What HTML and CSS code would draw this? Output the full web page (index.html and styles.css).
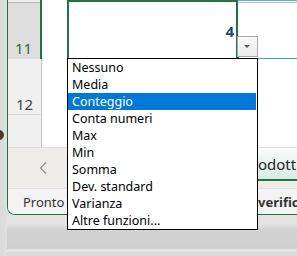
FILE: index.html
```html
<!DOCTYPE html>
<html lang="it">
<head>
    <meta charset="UTF-8">
    <meta name="viewport" content="width=device-width, initial-scale=1.0">
    <title>Foglio - Prodotti</title>
    <link rel="stylesheet" href="styles.css">
</head>
<body>
    <div class="desk">
        <div class="window">
            <div class="sheet">
                <!-- riga 11, cella attiva -->
                <div class="row r11">
                    <div class="rh sel">11</div>
                    <div class="cell a"></div>
                    <div class="cell active"><span class="num">4</span></div>
                    <div class="cell c"></div>
                </div>
                <div class="row r12">
                    <div class="rh">12</div>
                    <div class="cell a"></div>
                    <div class="cell wide"></div>
                </div>
                <div class="row r13">
                    <div class="rh"></div>
                    <div class="cell a"></div>
                    <div class="cell wide"></div>
                </div>
            </div>
            <div class="hscroll">
                <div class="nav">
                    <svg class="chev" width="8" height="12" viewBox="0 0 8 12">
                        <polyline points="7,0.5 1.5,6 7,11.5" fill="none" stroke="#8c8c8c" stroke-width="1.2"/>
                    </svg>
                </div>
                <div class="tab">Prodotti</div>
            </div>
            <div class="status">
                <span class="ready">Pronto</span>
                <span class="access">verificare</span>
            </div>
        </div>
        <div class="dot"></div>
    </div>

    <!-- menu a discesa della riga totali -->
    <button class="dd-btn"><span class="arrow"></span></button>
    <ul class="menu">
        <li>Nessuno</li>
        <li>Media</li>
        <li class="on">Conteggio</li>
        <li>Conta numeri</li>
        <li>Max</li>
        <li>Min</li>
        <li>Somma</li>
        <li>Dev. standard</li>
        <li>Varianza</li>
        <li>Altre funzioni...</li>
    </ul>
</body>
</html>
```

FILE: styles.css
```css
body {
    margin: 0;
    width: 297px;
    height: 256px;
    overflow: hidden;
    position: relative;
    font-family: "Noto Sans", "Open Sans", sans-serif;
    background: linear-gradient(to bottom, #e3e3e3 0, #e3e3e3 224px, #d2d2d2 230px, #cfcfcf 249px, #ebebeb 250px, #ebebeb 251px, #d9d9d9 252px);
}
.desk {
    height: 256px;
    position: relative;
    background: linear-gradient(to right, #d9d9d9 0, #e0e0e0 7px, transparent 7px);
}
.window {
    margin-left: 7px;
    height: 214px;
    border-left: 1px solid #217346;
    border-bottom: 1px solid #217346;
    border-bottom-left-radius: 8px;
    overflow: hidden;
    background: #fff;
}
.sheet {
    height: 147px;
}
.row {
    display: flex;
}
.r11 {
    height: 59px;
}
.r12 {
    height: 56px;
}
.r13 {
    height: 32px;
}
.rh {
    width: 34px;
    box-sizing: border-box;
    background-color: #f0f0f0;
    border-right: 1px solid #c4c4c4;
    color: #444;
    font-size: 15px;
    line-height: 20px;
    display: flex;
    justify-content: center;
    align-items: flex-end;
}
.r12 .rh {
    border-bottom: 1px solid #d6d6d6;
}
.rh.sel {
    background: linear-gradient(to bottom, #ececec 0, #ececec 2px, #b9b9b9 2px, #b9b9b9 3px, #dedede 3px);
    border-right: 2px solid #217346;
    color: #217346;
    padding-bottom: 1px;
    padding-right: 1px;
}
.cell {
    box-sizing: border-box;
    background-color: #fff;
}
.cell.a {
    width: 25px;
}
.cell.wide {
    flex: 1;
}
.cell.active {
    width: 171px;
    border: 2px solid #217346;
    border-bottom: none;
    display: flex;
    justify-content: flex-end;
    align-items: flex-start;
    padding: 19px 2px 0 0;
    position: relative;
}
.cell.active::after {
    content: "";
    position: absolute;
    right: -3px;
    bottom: 0;
    width: 3px;
    height: 3px;
    background-color: #217346;
}
.num {
    font-size: 15px;
    line-height: 20px;
    font-weight: bold;
    color: #1f4e5a;
}
.cell.c {
    flex: 1;
    border-bottom: 1px solid #3ea2c6;
    background: linear-gradient(to bottom, #63b0cb 0, #63b0cb 1px, #fff 1px, #fff 2px, #a3d3e4 2px, #a3d3e4 3px, #fff 3px);
}
.hscroll {
    height: 41px;
    display: grid;
    grid-template-columns: 227px 1fr;
    background-color: #eeede9;
    border-top: 1px solid #dcdcdc;
    box-sizing: border-box;
}
.nav {
    padding: 14px 0 0 31px;
}
.chev {
    display: block;
}
.tab {
    height: 33px;
    box-sizing: border-box;
    padding: 6px 0 0 8px;
    font-size: 15px;
    line-height: 20px;
    color: #262626;
    background: linear-gradient(to bottom, #fbfcfc 0, #eef4f2 40%, #dae9e4 100%);
    border-bottom: 2px solid #217346;
    white-space: nowrap;
}
.status {
    height: 26px;
    display: grid;
    grid-template-columns: 250px 1fr;
    align-items: center;
    background-color: #f3f3f3;
    border-top: 1px solid #e2e2e2;
    box-sizing: border-box;
    font-size: 13px;
    color: #333;
}
.ready {
    padding-left: 15px;
}
.access {
    font-weight: bold;
    white-space: nowrap;
}
.dot {
    position: absolute;
    left: -6px;
    top: 130px;
    width: 10px;
    height: 10px;
    border-radius: 50%;
    background-color: #4d3a2e;
}
.dd-btn {
    position: absolute;
    left: 237px;
    top: 36px;
    width: 21px;
    height: 21px;
    margin: 0;
    padding: 0;
    border: 1px solid #a9a9a9;
    background: linear-gradient(to bottom, #f9f9f9, #ececec);
    box-sizing: border-box;
}
.arrow {
    position: absolute;
    left: 6px;
    top: 8px;
    width: 0;
    height: 0;
    border-left: 3px solid transparent;
    border-right: 3px solid transparent;
    border-top: 3px solid #555;
}
.menu {
    position: absolute;
    left: 67px;
    top: 58px;
    width: 191px;
    box-sizing: border-box;
    margin: 0;
    padding: 0 1px 0 0;
    list-style: none;
    background-color: #fff;
    border: 1px solid #000;
}
.menu li {
    height: 17px;
    line-height: 17px;
    padding-left: 4px;
    font-size: 12.5px;
    color: #000;
    white-space: nowrap;
}
.menu li.on {
    background-color: #0078d7;
    color: #fff;
}
```
